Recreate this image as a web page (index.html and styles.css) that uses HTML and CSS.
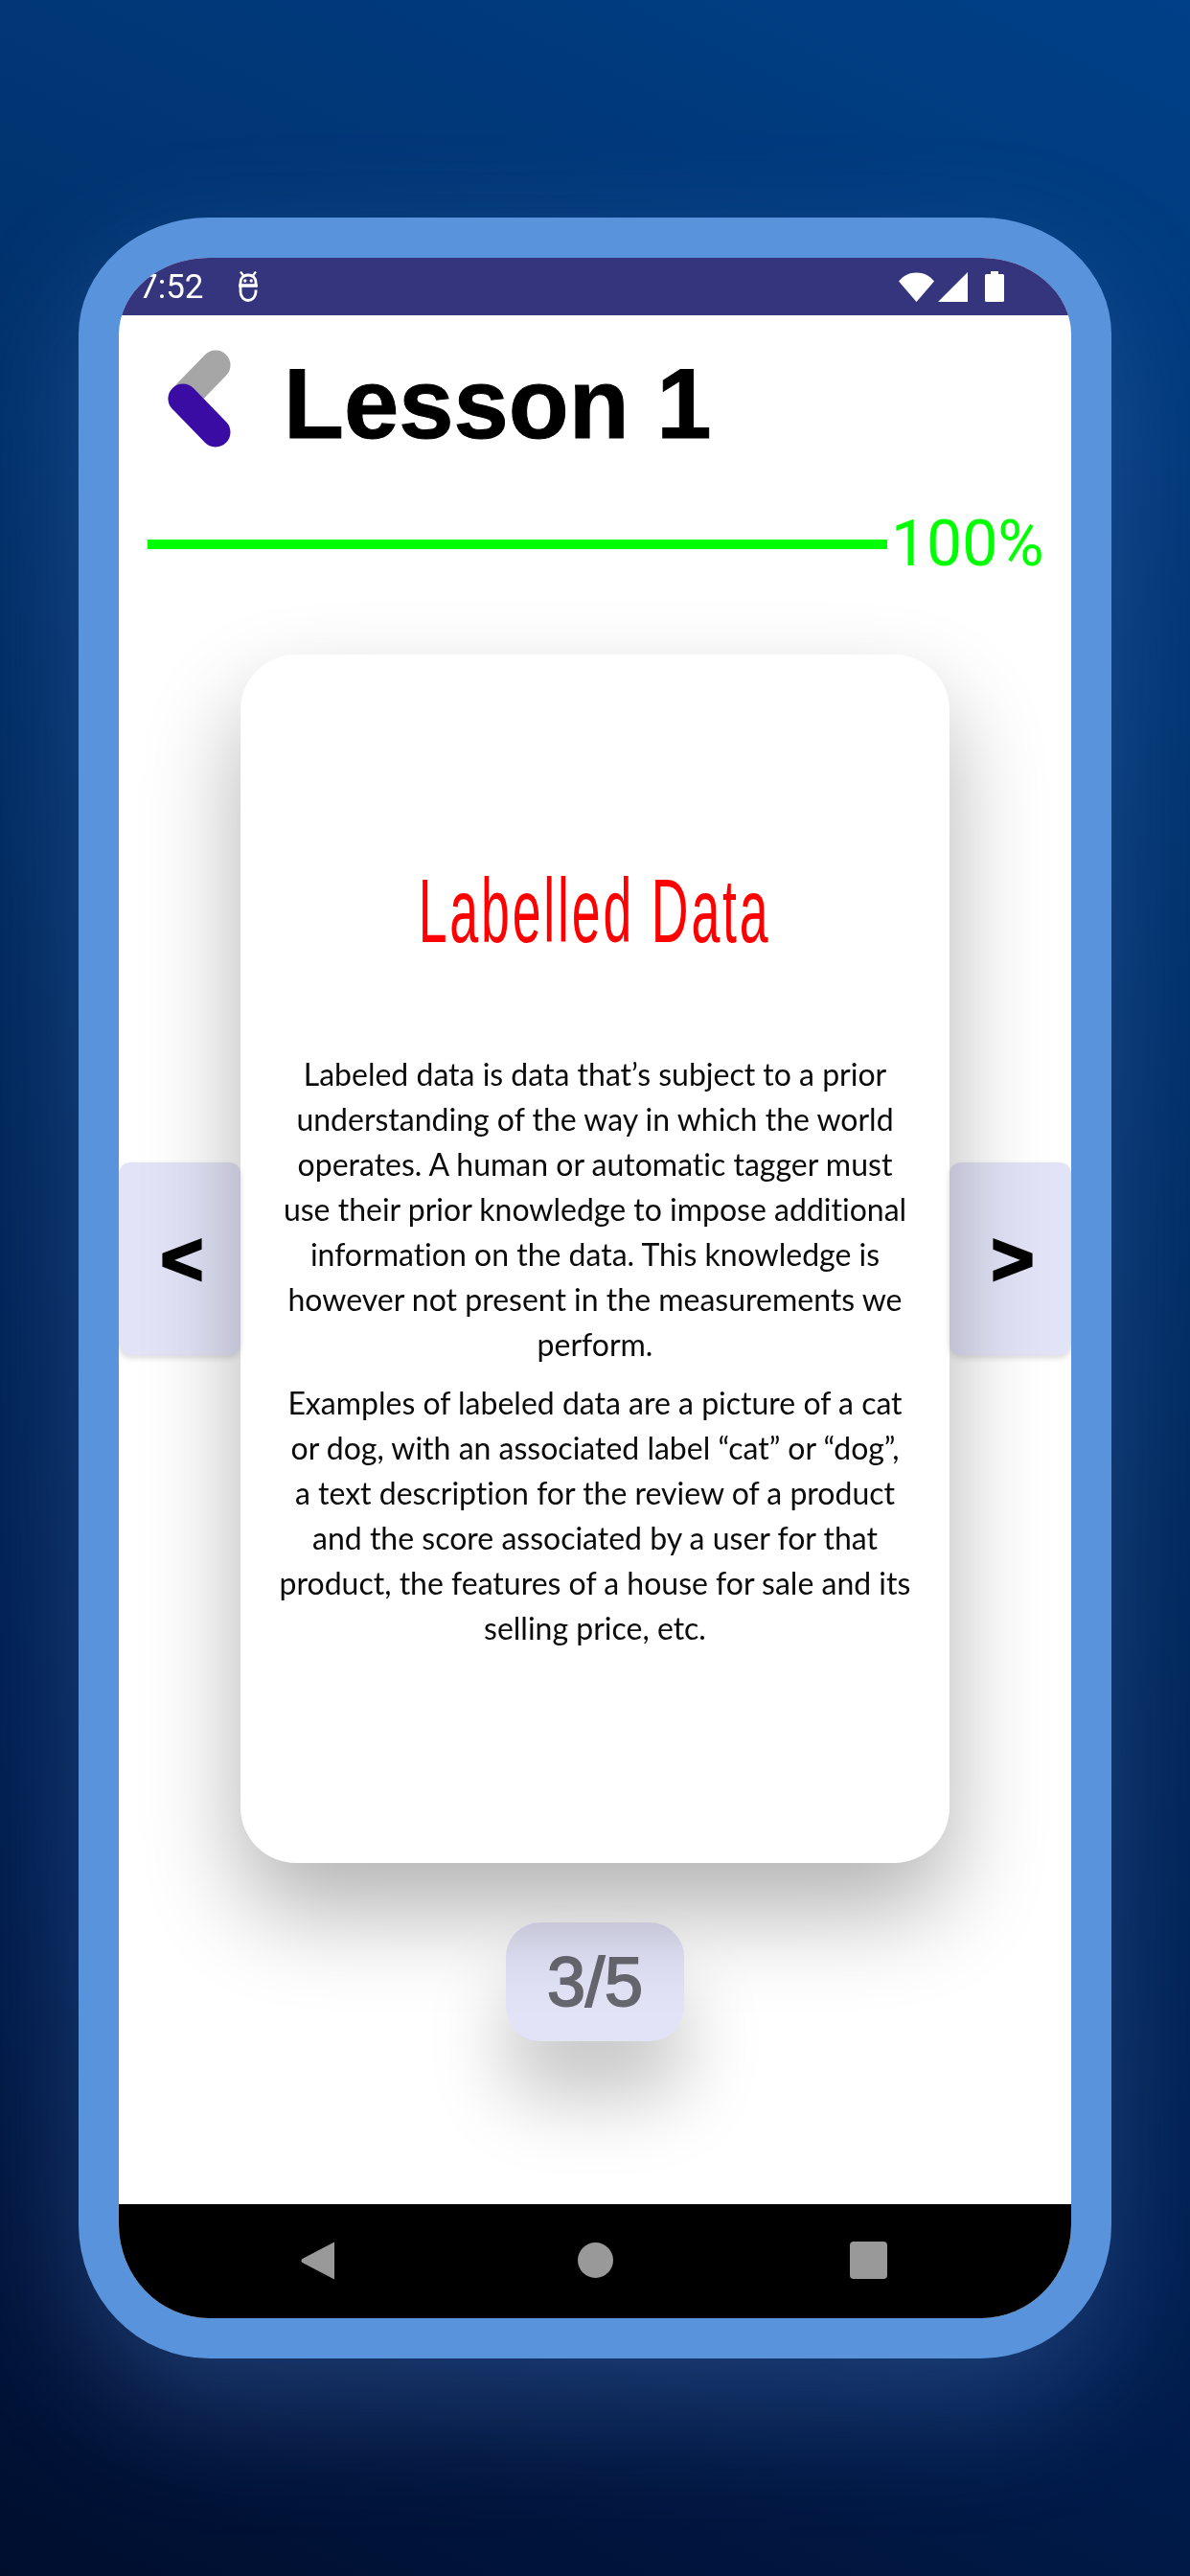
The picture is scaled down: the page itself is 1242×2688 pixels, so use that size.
FILE: index.html
```html
<!DOCTYPE html>
<html lang="en">
<head>
    <meta charset="UTF-8">
    <title>Lesson 1</title>
    <link rel="stylesheet" href="styles.css">
</head>
<body>
    <div class="phone">
        <div class="status">
            <div class="status-left">
                <span class="time">7:52</span>
                <svg class="debug-icon" viewBox="0 0 22 32" width="22" height="32">
                    <path d="M3 15V11.500C3 7 6.500 4 11 4S19 7 19 11.500V15H3" fill="none" stroke="#fff" stroke-width="2.800"/>
                    <path d="M1 15H21M3 15V21.500C3 26.500 6.500 30.500 11 30.500S19 26.500 19 21.500V19.500" fill="none" stroke="#fff" stroke-width="2.800"/>
                    <path d="M3 0.500L6 4.500M19 0.500L16 4.500" stroke="#fff" stroke-width="2.200"/>
                    <circle cx="7.800" cy="10" r="1.700" fill="#fff"/>
                    <circle cx="14.200" cy="10" r="1.700" fill="#fff"/>
                </svg>
            </div>
            <div class="status-right">
                <svg viewBox="0 0 37 31" width="37" height="31"><path d="M0 9.500C5 3.500 11 0.500 18.500 0.500S32 3.500 37 9.500L18.500 31Z" fill="#fff"/></svg>
                <svg viewBox="0 0 31 31" width="31" height="31"><path d="M31 0V31H0Z" fill="#fff"/></svg>
                <svg class="battery" viewBox="0 0 20 32" width="20" height="32"><path d="M6 0H14V3H18.500C19.300 3 20 3.700 20 4.500V30.500C20 31.300 19.300 32 18.500 32H1.500C0.700 32 0 31.300 0 30.500V4.500C0 3.700 0.700 3 1.500 3H6Z" fill="#fff"/></svg>
            </div>
        </div>

        <div class="header">
            <svg class="back" viewBox="0 0 68 104" width="68" height="104">
                <path d="M50 16L16 51" stroke="#a6a6a6" stroke-width="31" stroke-linecap="round"/>
                <path d="M16 51L50 86" stroke="#3a0ca3" stroke-width="31" stroke-linecap="round"/>
            </svg>
            <h1 class="lesson">Lesson 1</h1>
        </div>

        <div class="progress">
            <div class="bar"></div>
            <span class="percent">100%</span>
        </div>

        <div class="slide">
            <div class="arrow">&lt;</div>
            <div class="card">
                <h2 class="card-title">Labelled Data</h2>
                <p>Labeled data is data that’s subject to a prior<br>understanding of the way in which the world<br>operates. A human or automatic tagger must<br>use their prior knowledge to impose additional<br>information on the data. This knowledge is<br>however not present in the measurements we<br>perform.</p>
                <p>Examples of labeled data are a picture of a cat<br>or dog, with an associated label “cat” or “dog”,<br>a text description for the review of a product<br>and the score associated by a user for that<br>product, the features of a house for sale and its<br>selling price, etc.</p>
            </div>
            <div class="arrow">&gt;</div>
        </div>

        <div class="pager">3/5</div>

        <div class="nav">
            <svg viewBox="0 0 36 42" width="36" height="42"><path d="M35 1.500V40.500L1.500 23C0 22 0 20 1.500 19Z" fill="#999"/></svg>
            <svg class="home" viewBox="0 0 37 37" width="37" height="37"><circle cx="18.500" cy="18.500" r="18.500" fill="#999"/></svg>
            <svg viewBox="0 0 39 39" width="39" height="39"><rect width="39" height="39" rx="4" fill="#999"/></svg>
        </div>
    </div>
</body>
</html>
```

FILE: styles.css
```css
*{margin:0;padding:0;box-sizing:border-box;}
html,body{height:100%;}
body{
    height:2688px;
    padding:227px 82px 0;
    background:linear-gradient(205deg,#004088 0%,#00336f 25%,#01285c 50%,#001c4c 78%,#000e2e 100%);
    font-family:"Liberation Sans",Arial,sans-serif;
    overflow:hidden;
}
.phone{
    width:1078px;
    height:2234px;
    border:42px solid #5893dc;
    border-radius:136px / 122px 122px 140px 140px;
    background:#fff;
    overflow:hidden;
    display:flex;
    flex-direction:column;
    box-shadow:0 50px 130px rgba(90,140,220,.32);
}
.status{
    height:60px;
    flex:none;
    background:#34357d;
    display:flex;
    justify-content:space-between;
    align-items:center;
    padding:0 70px 0 21px;
}
.status-left{
    display:flex;
    align-items:center;
    gap:35px;
}
.time{
    font-family:Roboto,sans-serif;
    font-size:35px;
    color:#fff;
}
.status-right{
    display:flex;
    align-items:center;
    gap:4px;
}
.battery{margin-left:14px;}
.header{
    flex:none;
    height:209px;
    display:flex;
    align-items:flex-start;
    padding:36px 0 0 51px;
}
.lesson{
    margin-left:53px;
    padding-top:5px;
    font-size:103px;
    line-height:104px;
    font-weight:bold;
    color:#000;
    -webkit-text-stroke:1px #000;
}
.progress{
    flex:none;
    height:60px;
    display:flex;
    align-items:center;
    padding-left:30px;
}
.bar{
    width:772px;
    height:10px;
    background:#0f0;
}
.percent{
    margin-left:4px;
    font-family:Roboto,sans-serif;
    font-size:66px;
    line-height:60px;
    color:#0f0;
}
.slide{
    flex:none;
    margin-top:85px;
    display:grid;
    grid-template-columns:127px 740px 127px;
    align-items:center;
}
.arrow{
    height:201px;
    padding-left:5px;
    background:#e3e3f8;
    mix-blend-mode:multiply;
    border-radius:12px;
    box-shadow:0 3px 6px rgba(0,0,0,.14);
    display:flex;
    align-items:center;
    justify-content:center;
    font-size:76px;
    font-weight:bold;
    color:#000;
    -webkit-text-stroke:3px #000;
}
.card{
    height:1261px;
    padding-top:4px;
    background:#fff;
    border-radius:58px;
    box-shadow:0 50px 100px rgba(0,0,0,.3);
    display:flex;
    flex-direction:column;
    align-items:center;
    justify-content:center;
    font-family:Lato,sans-serif;
    font-variant-ligatures:none;
    font-size:32px;
    line-height:47px;
    color:#0a0a0a;
    text-align:center;
}
.card-title{
    font-family:"Liberation Sans",sans-serif;
    font-size:94px;
    line-height:110px;
    font-weight:normal;
    letter-spacing:5px;
    color:#f00;
    transform:scaleX(.57);
    margin-bottom:91px;
    white-space:nowrap;
}
.card p{margin-bottom:14px;white-space:nowrap;}
.pager{
    flex:none;
    align-self:center;
    margin-top:62px;
    width:186px;
    height:124px;
    background:#e3e3f8;
    mix-blend-mode:multiply;
    border-radius:36px;
    box-shadow:0 60px 80px rgba(0,0,0,.22);
    display:flex;
    align-items:center;
    justify-content:center;
    font-size:72px;
    color:#66666f;
    -webkit-text-stroke:2px #66666f;
}
.nav{
    margin-top:auto;
    flex:none;
    height:119px;
    background:#000;
    display:flex;
    align-items:center;
    padding:0 192px 2px 190px;
    justify-content:space-between;
}
.home{margin-left:5px;}
```
